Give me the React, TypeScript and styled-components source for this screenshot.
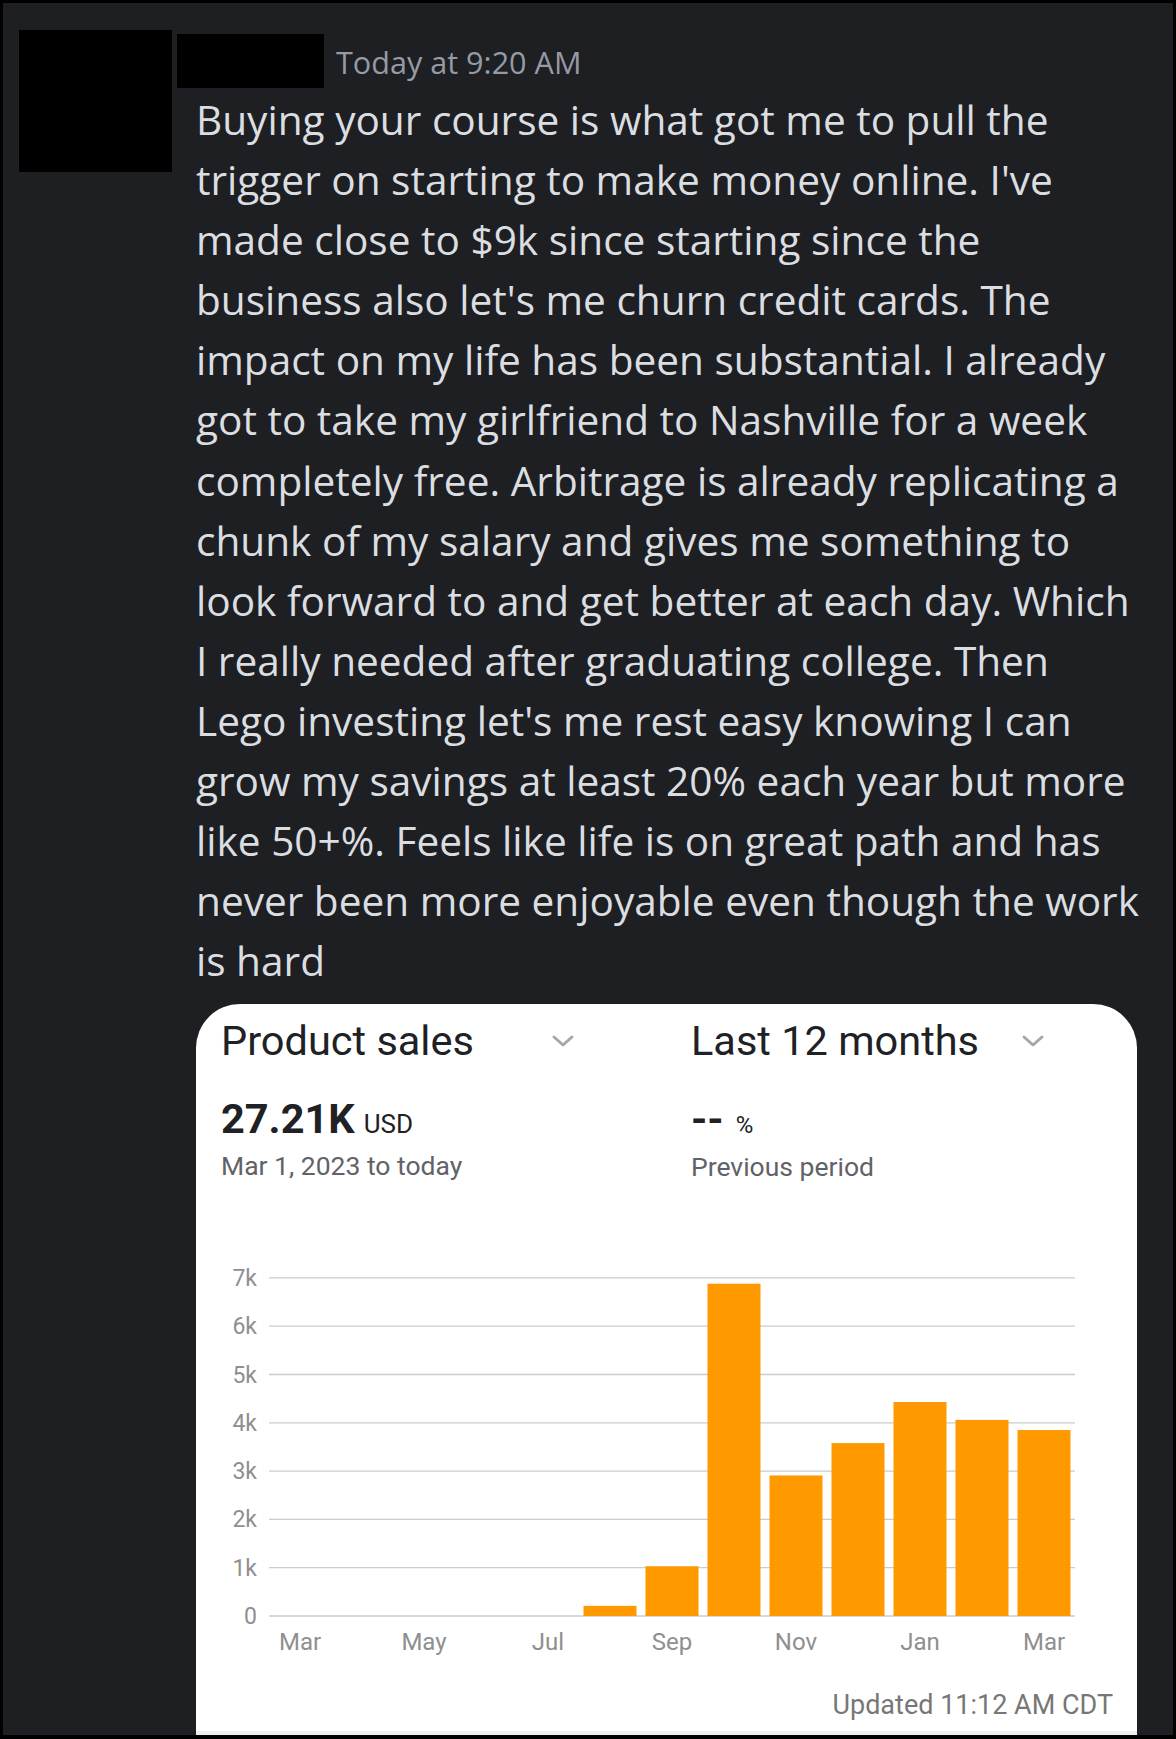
import React from 'react';
import styled, { createGlobalStyle } from 'styled-components';

const GlobalStyle = createGlobalStyle`
  html, body {
    margin: 0;
    padding: 0;
    background: #000000;
  }
  * {
    box-sizing: border-box;
  }
`;

const MESSAGE_LINES = [
  'Buying your course is what got me to pull the',
  "trigger on starting to make money online. I've",
  'made close to $9k since starting since the',
  "business also let's me churn credit cards. The",
  'impact on my life has been substantial. I already',
  'got to take my girlfriend to Nashville for a week',
  'completely free. Arbitrage is already replicating a',
  'chunk of my salary and gives me something to',
  'look forward to and get better at each day. Which',
  'I really needed after graduating college. Then',
  "Lego investing let's me rest easy knowing I can",
  'grow my savings at least 20% each year but more',
  'like 50+%. Feels like life is on great path and has',
  'never been more enjoyable even though the work',
  'is hard',
];

// monthly sales in thousands, Mar 2023 .. Mar 2024
const SALES = [0, 0, 0, 0, 0, 0.21, 1.03, 6.88, 2.91, 3.58, 4.43, 4.06, 3.85];
const X_LABELS = ['Mar', '', 'May', '', 'Jul', '', 'Sep', '', 'Nov', '', 'Jan', '', 'Mar'];

const PLOT_LEFT = 73;
const SLOT = 62;
const BAR_W = 53;
const STEP = 48.3;
const ZERO_Y = 366;

const Chevron = () => (
  <svg width="24" height="14" viewBox="0 0 24 14">
    <polyline points="3,3 12,11 21,3" fill="none" stroke="#a6a6a6" strokeWidth="3" strokeLinecap="round" strokeLinejoin="round" />
  </svg>
);

const SalesChart = () => (
  <ChartSvg width="941" height="412" viewBox="0 0 941 412">
    {[7, 6, 5, 4, 3, 2, 1, 0].map((k) => {
      const y = ZERO_Y - k * STEP;
      return (
        <g key={k}>
          <line x1={PLOT_LEFT} x2={PLOT_LEFT + SLOT * 13} y1={y} y2={y} stroke="#cccccc" strokeWidth="1.3" />
          <text x={61} y={y + 8} textAnchor="end" fontSize="23" fill="#8f8f8f">
            {k === 0 ? '0' : `${k}k`}
          </text>
        </g>
      );
    })}
    {SALES.map((v, i) =>
      v > 0 ? (
        <rect
          key={i}
          x={PLOT_LEFT + i * SLOT + (SLOT - BAR_W) / 2}
          y={ZERO_Y - v * STEP}
          width={BAR_W}
          height={v * STEP}
          fill="#ff9900"
        />
      ) : null
    )}
    {X_LABELS.map((label, i) =>
      label ? (
        <text key={i} x={PLOT_LEFT + i * SLOT + SLOT / 2} y={400} textAnchor="middle" fontSize="24" fill="#8f8f8f">
          {label}
        </text>
      ) : null
    )}
  </ChartSvg>
);

const App = () => {
  return (
    <>
      <GlobalStyle />
      <Frame>
        <Avatar />
        <Content>
          <Header>
            <NameBox />
            <Timestamp>Today at 9:20 AM</Timestamp>
          </Header>
          <Body>
            {MESSAGE_LINES.map((line, i) => (
              <Line key={i}>{line}</Line>
            ))}
          </Body>
          <Card>
            <StatsGrid>
              <StatColumn>
                <TitleRow>
                  <Title>Product sales</Title>
                  <Chevron />
                </TitleRow>
                <BigValue>
                  27.21K<Unit>USD</Unit>
                </BigValue>
                <SubLabel>Mar 1, 2023 to today</SubLabel>
              </StatColumn>
              <StatColumn>
                <TitleRow>
                  <Title>Last 12 months</Title>
                  <Chevron />
                </TitleRow>
                <BigValue>
                  --<Unit small>%</Unit>
                </BigValue>
                <SubLabel>Previous period</SubLabel>
              </StatColumn>
            </StatsGrid>
            <SalesChart />
            <Updated>Updated 11:12 AM CDT</Updated>
          </Card>
        </Content>
      </Frame>
    </>
  );
};

export default App;

const Frame = styled.div`
  width: 1176px;
  height: 1739px;
  overflow: hidden;
  background: #1e1f23;
  border-style: solid;
  border-color: #000000;
  border-width: 3px 3px 4px 3px;
  display: grid;
  grid-template-columns: 174px 1fr;
  padding: 27px 0 0 16px;
`;

const Avatar = styled.div`
  width: 153px;
  height: 142px;
  background: #000000;
`;

const Content = styled.div`
  display: flex;
  flex-direction: column;
  align-items: flex-start;
`;

const Header = styled.div`
  display: flex;
  align-items: center;
  gap: 12px;
  height: 58px;
  margin-left: -16px;
`;

const NameBox = styled.div`
  width: 147px;
  height: 54px;
  margin-top: 4px;
  background: #000000;
`;

const Timestamp = styled.span`
  font-family: 'Open Sans', 'Noto Sans', sans-serif;
  font-size: 30.6px;
  font-weight: 400;
  color: #949ba4;
  padding-top: 6px;
`;

const Body = styled.div`
  margin-left: 3px;
  padding-top: 2px;
  font-family: 'Open Sans', 'Noto Sans', sans-serif;
  font-size: 40.6px;
  font-weight: 400;
  line-height: 60.1px;
  color: #dbdee1;
`;

const Line = styled.div`
  white-space: nowrap;
`;

const Card = styled.div`
  margin-top: 13px;
  margin-left: 3px;
  width: 941px;
  height: 734px;
  background: #ffffff;
  border-radius: 44px 44px 0 0;
  border-bottom: 7px solid #efefef;
  font-family: Roboto, 'Liberation Sans', sans-serif;
  display: flex;
  flex-direction: column;
`;

const StatsGrid = styled.div`
  display: grid;
  grid-template-columns: 470px 1fr;
  padding: 12px 0 0 25px;
`;

const StatColumn = styled.div`
  display: flex;
  flex-direction: column;
`;

const TitleRow = styled.div`
  display: grid;
  grid-template-columns: 330px 24px;
  align-items: center;
  height: 46px;
`;

const Title = styled.span`
  font-size: 41.5px;
  color: #202124;
`;

const BigValue = styled.div`
  margin-top: 34px;
  font-size: 41.5px;
  font-weight: 700;
  color: #202124;
  line-height: 46px;
  display: flex;
  align-items: baseline;
`;

const Unit = styled.span<{ small?: boolean }>`
  font-size: ${({ small }) => (small ? '24px' : '26px')};
  font-weight: 400;
  margin-left: ${({ small }) => (small ? '12px' : '9px')};
`;

const SubLabel = styled.div`
  margin-top: 3px;
  font-size: 26.5px;
  line-height: 32px;
  color: #5f6368;
`;

const ChartSvg = styled.svg`
  display: block;
  margin-top: 67px;
  font-family: Roboto, 'Liberation Sans', sans-serif;
`;

const Updated = styled.div`
  margin-top: 27px;
  padding-right: 24px;
  text-align: right;
  font-size: 27px;
  line-height: 32px;
  color: #777777;
`;
